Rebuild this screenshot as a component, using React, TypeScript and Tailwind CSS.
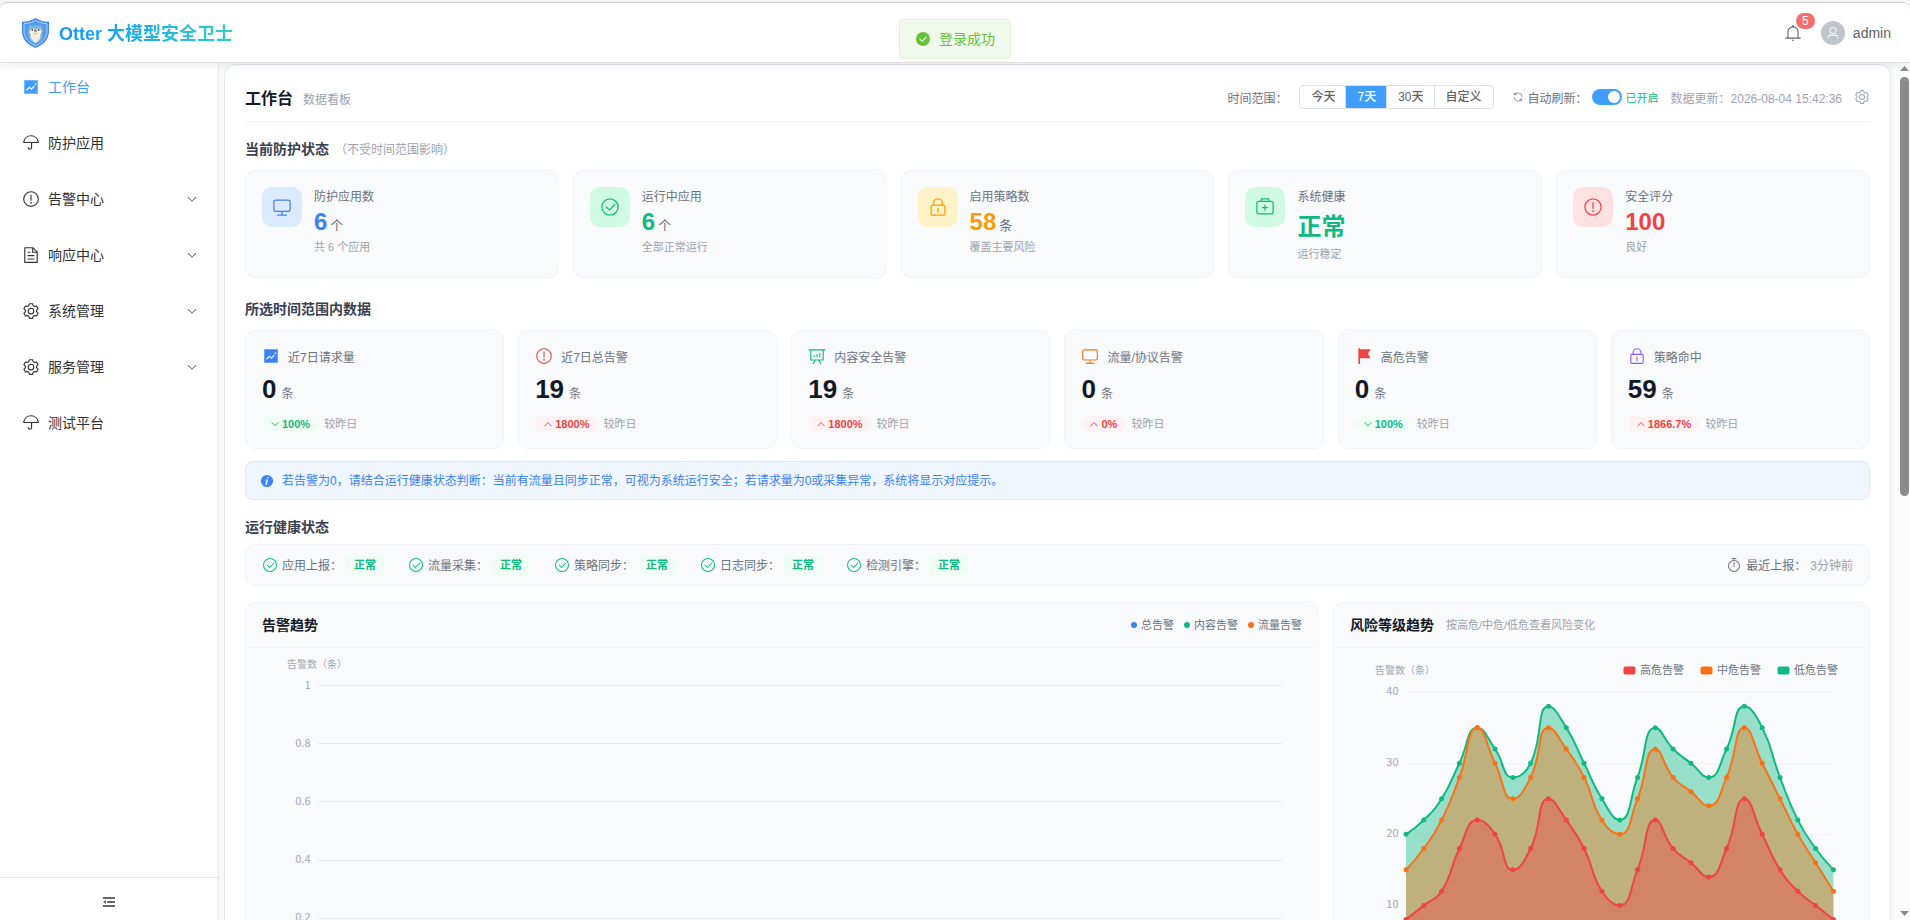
import React from "react";

// Icon outlines on a 1024 x 1024 grid
const ICONS = {
  trend: "M128 896V128h768v768zm291.712-327.296 128 102.4 180.16-201.792-47.744-42.624-139.84 156.608-128-102.4-180.16 201.792 47.744 42.624 139.84-156.608zM816 352a48 48 0 1 0-96 0 48 48 0 0 0 96 0",
  umbrella: "M320 768a32 32 0 1 1 64 0 64 64 0 0 0 128 0V512H64a448 448 0 1 1 896 0H576v256a128 128 0 1 1-256 0m570.688-320a384.128 384.128 0 0 0-757.376 0z",
  warning: "M512 64a448 448 0 1 1 0 896 448 448 0 0 1 0-896m0 832a384 384 0 0 0 0-768 384 384 0 0 0 0 768m48-176a48 48 0 1 1-96 0 48 48 0 0 1 96 0m-48-464a32 32 0 0 1 32 32v288a32 32 0 0 1-64 0V288a32 32 0 0 1 32-32",
  document: "M832 384H576V128H192v768h640zm-26.496-64L640 154.496V320zM160 64h480l256 256v608a32 32 0 0 1-32 32H160a32 32 0 0 1-32-32V96a32 32 0 0 1 32-32m160 448h384v64H320zm0-192h160v64H320zm0 384h384v64H320z",
  setting: "M600.704 64a32 32 0 0 1 30.464 22.208l35.2 109.376c14.784 7.232 28.928 15.36 42.432 24.512l112.384-24.192a32 32 0 0 1 34.432 15.36L944.32 364.8a32 32 0 0 1-4.032 37.504l-77.12 85.12a357.12 357.12 0 0 1 0 49.024l77.12 85.248a32 32 0 0 1 4.032 37.504l-88.704 153.6a32 32 0 0 1-34.432 15.296L708.8 803.904c-13.44 9.088-27.648 17.28-42.368 24.512l-35.264 109.376A32 32 0 0 1 600.704 960H423.296a32 32 0 0 1-30.464-22.208L357.696 828.48a351.616 351.616 0 0 1-42.56-24.64l-112.32 24.256a32 32 0 0 1-34.432-15.36L79.68 659.2a32 32 0 0 1 4.032-37.504l77.12-85.248a357.12 357.12 0 0 1 0-48.896l-77.12-85.248A32 32 0 0 1 79.68 364.8l88.704-153.6a32 32 0 0 1 34.432-15.296l112.32 24.256c13.568-9.152 27.776-17.408 42.56-24.64l35.2-109.312A32 32 0 0 1 423.232 64H600.64zm-23.424 64H446.72l-36.352 113.088-24.512 11.968a294.113 294.113 0 0 0-34.816 20.096l-22.656 15.36-116.224-25.088-65.28 113.152 79.68 88.192-1.92 27.136a293.12 293.12 0 0 0 0 40.192l1.92 27.136-79.808 88.192 65.344 113.152 116.224-25.024 22.656 15.296a294.113 294.113 0 0 0 34.816 20.096l24.512 11.968L446.72 896h130.688l36.48-113.152 24.448-11.904a288.282 288.282 0 0 0 34.752-20.096l22.592-15.296 116.288 25.024 65.28-113.152-79.744-88.192 1.92-27.136a293.12 293.12 0 0 0 0-40.256l-1.92-27.136 79.808-88.128-65.344-113.152-116.288 24.96-22.592-15.232a287.616 287.616 0 0 0-34.752-20.096l-24.448-11.904L577.344 128zM512 320a192 192 0 1 1 0 384 192 192 0 0 1 0-384m0 64a128 128 0 1 0 0 256 128 128 0 0 0 0-256",
  down: "M831.872 340.864 512 652.672 192.128 340.864a30.592 30.592 0 0 0-42.752 0 29.12 29.12 0 0 0 0 41.6L489.664 714.24a32 32 0 0 0 44.672 0l340.288-331.712a29.12 29.12 0 0 0 0-41.728 30.592 30.592 0 0 0-42.752 0z",
  up: "m488.832 344.32-339.84 356.672a32 32 0 0 0 0 44.16l.384.384a29.44 29.44 0 0 0 42.688 0l320-335.872 319.872 335.872a29.44 29.44 0 0 0 42.688 0l.384-.384a32 32 0 0 0 0-44.16L535.168 344.32a32 32 0 0 0-46.336 0",
  monitor: "M544 768v128h192a32 32 0 1 1 0 64H288a32 32 0 1 1 0-64h192V768H192A128 128 0 0 1 64 640V256a128 128 0 0 1 128-128h640a128 128 0 0 1 128 128v384a128 128 0 0 1-128 128zM192 192a64 64 0 0 0-64 64v384a64 64 0 0 0 64 64h640a64 64 0 0 0 64-64V256a64 64 0 0 0-64-64z",
  check: "M512 896a384 384 0 1 0 0-768 384 384 0 0 0 0 768m0 64a448 448 0 1 1 0-896 448 448 0 0 1 0 896M745.344 361.344a32 32 0 0 1 45.312 45.312l-288 288a32 32 0 0 1-45.312 0l-160-160a32 32 0 1 1 45.312-45.312L480 626.752z",
  lock: "M224 448a32 32 0 0 0-32 32v384a32 32 0 0 0 32 32h576a32 32 0 0 0 32-32V480a32 32 0 0 0-32-32zm0-64h576a96 96 0 0 1 96 96v384a96 96 0 0 1-96 96H224a96 96 0 0 1-96-96V480a96 96 0 0 1 96-96M512 544a32 32 0 0 1 32 32v192a32 32 0 1 1-64 0V576a32 32 0 0 1 32-32m192-160v-64a192 192 0 1 0-384 0v64zM512 64a256 256 0 0 1 256 256v128H256V320A256 256 0 0 1 512 64",
  kit: "M192 256a64 64 0 0 0-64 64v448a64 64 0 0 0 64 64h640a64 64 0 0 0 64-64V320a64 64 0 0 0-64-64zm0-64h640a128 128 0 0 1 128 128v448a128 128 0 0 1-128 128H192A128 128 0 0 1 64 768V320a128 128 0 0 1 128-128M544 512h96a32 32 0 0 1 0 64h-96v96a32 32 0 0 1-64 0v-96h-96a32 32 0 0 1 0-64h96v-96a32 32 0 0 1 64 0zM352 128v64h320v-64zm-32-64h384a32 32 0 0 1 32 32v128a32 32 0 0 1-32 32H320a32 32 0 0 1-32-32V96a32 32 0 0 1 32-32",
  analysis: "m665.216 768 110.848 192h-73.856L591.36 768H433.024L322.176 960H248.32l110.848-192H160a32 32 0 0 1-32-32V192H64a32 32 0 0 1 0-64h896a32 32 0 1 1 0 64h-64v544a32 32 0 0 1-32 32zM832 192H192v512h640zM352 448a32 32 0 0 1 32 32v64a32 32 0 0 1-64 0v-64a32 32 0 0 1 32-32m160-64a32 32 0 0 1 32 32v128a32 32 0 0 1-64 0V416a32 32 0 0 1 32-32m160-64a32 32 0 0 1 32 32v192a32 32 0 1 1-64 0V352a32 32 0 0 1 32-32",
  flag: "M288 128h608L736 384l160 256H288v320h-96V64h96z",
  info: "M512 64a448 448 0 1 1 0 896.064A448 448 0 0 1 512 64m67.2 275.072c33.28 0 60.288-23.104 60.288-57.344s-27.072-57.344-60.288-57.344c-33.28 0-60.16 23.104-60.16 57.344s26.88 57.344 60.16 57.344M590.912 699.2c0-6.848 2.368-24.64 1.024-34.752l-52.608 60.544c-10.88 11.456-24.512 19.392-30.912 17.28a12.992 12.992 0 0 1-8.256-14.72l87.68-276.992c7.168-35.136-12.544-67.2-54.336-71.296-44.096 0-108.992 44.736-148.48 101.504 0 6.784-1.28 23.68.064 33.792l52.544-60.608c10.88-11.328 23.552-19.328 29.952-17.152a12.8 12.8 0 0 1 7.808 16.128L388.48 728.576c-10.048 32.256 8.96 63.872 55.04 71.04 67.84 0 107.904-43.648 147.456-100.416z",
  success: "M512 64a448 448 0 1 1 0 896 448 448 0 0 1 0-896m-55.808 536.384-99.52-99.584a38.4 38.4 0 1 0-54.336 54.336l126.72 126.72a38.272 38.272 0 0 0 54.336 0l262.4-262.464a38.4 38.4 0 1 0-54.272-54.336z",
  refresh: "M771.776 794.88A384 384 0 0 1 128 512h64a320 320 0 0 0 555.712 216.448H654.72a32 32 0 1 1 0-64h149.056a32 32 0 0 1 32 32v148.928a32 32 0 1 1-64 0v-50.56zM276.288 295.616h92.992a32 32 0 0 1 0 64H220.16a32 32 0 0 1-32-32V178.56a32 32 0 0 1 64 0v50.56A384 384 0 0 1 896.128 512h-64a320 320 0 0 0-555.776-216.384z",
  user: "M512 512a192 192 0 1 0 0-384 192 192 0 0 0 0 384m0 64a256 256 0 1 1 0-512 256 256 0 0 1 0 512m320 320v-96a96 96 0 0 0-96-96H288a96 96 0 0 0-96 96v96a32 32 0 1 1-64 0v-96a160 160 0 0 1 160-160h448a160 160 0 0 1 160 160v96a32 32 0 1 1-64 0",
  bell: "M512 64a64 64 0 0 1 64 64v64H448v-64a64 64 0 0 1 64-64M256 768h512V448a256 256 0 1 0-512 0zm256-640a320 320 0 0 1 320 320v384H192V448a320 320 0 0 1 320-320M96 768h832q32 0 32 32t-32 32H96q-32 0-32-32t32-32m352 128h128a64 64 0 0 1-128 0",
  timer: "M512 896a320 320 0 1 0 0-640 320 320 0 0 0 0 640m0 64a384 384 0 1 1 0-768 384 384 0 0 1 0 768M512 320a32 32 0 0 1 32 32l-.512 224a32 32 0 1 1-64 0L480 352a32 32 0 0 1 32-32M448 576a64 64 0 1 0 128 0 64 64 0 1 0-128 0m96-448v128h-64V128h-96a32 32 0 0 1 0-64h256a32 32 0 1 1 0 64z",
};

type IconName = keyof typeof ICONS;

function Icon({ name, className }: { name: IconName; className?: string }) {
  return (
    <svg viewBox="0 0 1024 1024" fill="currentColor" className={`shrink-0 ${className ?? ""}`}>
      <path d={ICONS[name]} />
    </svg>
  );
}

function Logo() {
  return (
    <svg viewBox="0 0 27 30" className="h-[30px] w-[27px]">
      <path d="M13.5 0C17 2.4 21.5 3.6 27 3.8V13c0 8-5 13.5-13.5 17C5 26.5 0 21 0 13V3.8C5.5 3.6 10 2.4 13.5 0z" fill="#3f86ea" />
      <path d="M13.5 2.3c3.2 2 7 3 11.5 3.3V13c0 7-4.3 11.7-11.5 14.9C6.3 24.7 2 20 2 13V5.6c4.5-.3 8.3-1.300 11.5-3.3z" fill="#4e9bf3" stroke="#cfe6fd" strokeWidth="0.8" />
      <path d="M7 9c0-2 2-2.600 3.300-1.500h6.400C18 6.400 20 7 20 9c1 2 1.300 5 .4 7.500.8 3-.9 6.500-6.900 9.500-6-3-7.700-6.500-6.900-9.500C5.700 14 6 11 7 9z" fill="#7fb6d3" />
      <path d="M8.200 11.500c1.600-1.300 3.300-.8 5.300.2 2-1 3.700-1.500 5.300-.2.900 2.200.6 4-.6 5.500.8 3-1 5.800-4.700 7.700-3.700-1.900-5.500-4.700-4.700-7.700-1.200-1.500-1.500-3.300-.6-5.500z" fill="#f4efe0" />
      <circle cx="10.3" cy="11.8" r="0.9" fill="#26384d" />
      <circle cx="16.7" cy="11.8" r="0.9" fill="#26384d" />
      <ellipse cx="13.5" cy="12.8" rx="1.5" ry="1.1" fill="#b7604a" />
      <path d="M11.8 15.2q1.700 1.200 3.400 0" stroke="#8d9aa0" strokeWidth="0.6" fill="none" />
    </svg>
  );
}

function Header() {
  return (
    <header className="relative z-10 flex h-[60px] shrink-0 items-center justify-between border-b border-[#e0e0e0] bg-white pr-[19px] pl-[22px] shadow-[0_2px_8px_rgba(0,0,0,0.08)]">
      <div className="flex items-center gap-2.5">
        <Logo />
        <h1 className="bg-gradient-to-r from-[#1890ff] to-[#36cfc9] bg-clip-text pt-[3px] text-[18px] leading-6 font-bold text-transparent">
          Otter 大模型安全卫士
        </h1>
      </div>
      <div className="flex items-center">
        <div className="relative mr-[19px] text-[#606266]">
          <Icon name="bell" className="size-[18px]" />
          <span className="absolute -top-[11px] left-[12px] flex h-4 w-[19px] items-center justify-center rounded-full bg-[#f56c6c] text-xs leading-none text-white">
            5
          </span>
        </div>
        <span className="mr-2 flex size-6 items-center justify-center rounded-full bg-[#c0c4cc] text-white">
          <Icon name="user" className="size-3.5" />
        </span>
        <span className="text-sm text-[#606266]">admin</span>
      </div>
      {/* Login toast */}
      <div className="absolute top-4 left-[899px] flex h-10 w-[112px] items-center gap-2 rounded border border-[#e1f3d8] bg-[#f0f9eb] pl-[15px] text-[#67c23a]">
        <Icon name="success" className="size-4" />
        <span className="text-sm whitespace-nowrap">登录成功</span>
      </div>
    </header>
  );
}

const menu: { icon: IconName; label: string; sub?: boolean; active?: boolean }[] = [
  { icon: "trend", label: "工作台", active: true },
  { icon: "umbrella", label: "防护应用" },
  { icon: "warning", label: "告警中心", sub: true },
  { icon: "document", label: "响应中心", sub: true },
  { icon: "setting", label: "系统管理", sub: true },
  { icon: "setting", label: "服务管理", sub: true },
  { icon: "umbrella", label: "测试平台" },
];

function Sidebar() {
  return (
    <aside className="flex w-[219px] shrink-0 flex-col border-r border-[#e4e7ed] bg-white">
      <nav className="-mt-1 flex-1">
        {menu.map((item) => (
          <div
            key={item.label}
            className={`flex h-14 items-center pr-5 pl-[22px] text-sm ${item.active ? "text-[#409eff]" : "text-[#303133]"}`}
          >
            <Icon name={item.icon} className="mr-2 size-[18px]" />
            <span className="flex-1">{item.label}</span>
            {item.sub && <Icon name="down" className="size-3" />}
          </div>
        ))}
      </nav>
      <div className="flex h-[43px] items-center justify-center border-t border-[#e4e7ed] pt-1.5">
        <svg viewBox="0 0 12 10" className="h-2.5 w-3" fill="#666">
          <path d="M0 0h12v2H0zM4 4h8v2H4zM0 8h12v2H0zM3 3v4L0 5z" />
        </svg>
      </div>
    </aside>
  );
}

function Toolbar() {
  const ranges = ["今天", "7天", "30天", "自定义"];
  return (
    <div className="flex items-center justify-between border-b border-[#f0f2f5] pt-5 pb-3 text-xs">
      <div className="flex h-6 items-center gap-2.5">
        <h2 className="pt-[3px] text-base leading-6 font-bold text-[#111827]">工作台</h2>
        <span className="pt-[5px] text-[#9ca3af]">数据看板</span>
      </div>
      <div className="flex h-6 items-center">
        <span className="mr-3 pt-[3px] text-[#6b7280]">时间范围：</span>
        <div className="mr-[18px] flex h-6 overflow-hidden rounded border border-[#dcdfe6] font-medium">
          {ranges.map((r) => (
            <button
              key={r}
              className={`border-r border-[#dcdfe6] pr-2.5 pl-[11px] last:border-r-0 last:pr-[11px] ${r === "7天" ? "bg-[#409eff] text-white" : "text-[#606266]"}`}
            >
              {r}
            </button>
          ))}
        </div>
        <Icon name="refresh" className="mr-1 size-3 text-[#6b7280]" />
        <span className="pt-[3px] text-[#6b7280]">自动刷新：</span>
        <span className="ml-1 flex h-4 w-[30px] items-center justify-end rounded-full bg-[#409eff] pr-0.5">
          <span className="size-3 rounded-full bg-white" />
        </span>
        <span className="mr-3 ml-1 pt-0.5 text-[11px] text-[#10b981]">已开启</span>
        <span className="mr-3 pt-[3px] text-[#9ca3af]">数据更新：2026-08-04 15:42:36</span>
        <Icon name="setting" className="size-4 text-[#9ca3af]" />
      </div>
    </div>
  );
}

function SectionTitle({ title, note, className }: { title: string; note?: string; className: string }) {
  return (
    <div className={`flex h-[22px] items-center gap-1.5 ${className}`}>
      <h3 className="text-sm font-bold text-[#374151]">{title}</h3>
      {note && <span className="pt-px text-xs text-[#9ca3af]">{note}</span>}
    </div>
  );
}

const statusCards: { icon: IconName; box: string; color: string; label: string; value: string; unit?: string; desc: string }[] = [
  { icon: "monitor", box: "bg-[#dbeafe] text-[#3b82f6]", color: "text-[#3b82f6]", label: "防护应用数", value: "6", unit: "个", desc: "共 6 个应用" },
  { icon: "check", box: "bg-[#d1fae5] text-[#10b981]", color: "text-[#10b981]", label: "运行中应用", value: "6", unit: "个", desc: "全部正常运行" },
  { icon: "lock", box: "bg-[#fef3c7] text-[#f59e0b]", color: "text-[#f59e0b]", label: "启用策略数", value: "58", unit: "条", desc: "覆盖主要风险" },
  { icon: "kit", box: "bg-[#d1fae5] text-[#10b981]", color: "text-[#10b981]", label: "系统健康", value: "正常", desc: "运行稳定" },
  { icon: "warning", box: "bg-[#fee2e2] text-[#ef4444]", color: "text-[#ef4444]", label: "安全评分", value: "100", desc: "良好" },
];

function StatusCards() {
  return (
    <div className="grid grid-cols-5 gap-3.5">
      {statusCards.map((c) => (
        <div key={c.label} className="flex h-[108px] gap-3 rounded-[10px] border border-[#f1f3f6] bg-[#f9fafc] p-4">
          <span className={`flex size-10 shrink-0 items-center justify-center rounded-[10px] ${c.box}`}>
            <Icon name={c.icon} className="size-5" />
          </span>
          <div>
            <div className="pt-0.5 text-xs leading-4 text-[#6b7280]">{c.label}</div>
            <div className={`flex items-baseline gap-[3px] ${c.unit || c.value === "100" ? "h-[33px] leading-[33px]" : "h-10 leading-[44px]"}`}>
              <span className={`text-2xl leading-[inherit] font-bold ${c.color}`}>{c.value}</span>
              {c.unit && <span className="text-[13px] leading-none text-[#6b7280]">{c.unit}</span>}
            </div>
            <div className="text-[11px] leading-[18px] text-[#9ca3af]">{c.desc}</div>
          </div>
        </div>
      ))}
    </div>
  );
}

const metrics: { icon: IconName; color: string; label: string; value: string; change: string; up: boolean }[] = [
  { icon: "trend", color: "text-[#3b82f6]", label: "近7日请求量", value: "0", change: "100%", up: false },
  { icon: "warning", color: "text-[#ef4444]", label: "近7日总告警", value: "19", change: "1800%", up: true },
  { icon: "analysis", color: "text-[#10b981]", label: "内容安全告警", value: "19", change: "1800%", up: true },
  { icon: "monitor", color: "text-[#f97316]", label: "流量/协议告警", value: "0", change: "0%", up: true },
  { icon: "flag", color: "text-[#ef4444]", label: "高危告警", value: "0", change: "100%", up: false },
  { icon: "lock", color: "text-[#8b5cf6]", label: "策略命中", value: "59", change: "1866.7%", up: true },
];

function MetricCards() {
  return (
    <div className="grid grid-cols-6 gap-3.5">
      {metrics.map((m) => (
        <div key={m.label} className="h-[119px] rounded-[10px] border border-[#f1f3f6] bg-[#f9fafc] p-4">
          <div className="flex h-[18px] items-center gap-2">
            <Icon name={m.icon} className={`size-[18px] ${m.color}`} />
            <span className="pt-1 text-xs leading-4 text-[#6b7280]">{m.label}</span>
          </div>
          <div className="mt-2 flex h-8 items-baseline gap-[5px]">
            <span className="text-[26px] leading-8 font-bold text-[#111827]">{m.value}</span>
            <span className="text-xs leading-none text-[#6b7280]">条</span>
          </div>
          <div className="mt-[11px] flex h-4 items-center gap-1.5 text-[11px]">
            <span
              className={`flex h-4 items-center gap-0.5 rounded-full px-2 font-bold ${m.up ? "bg-[#fef2f2] text-[#ef4444]" : "bg-[#f0fdf4] text-[#10b981]"}`}
            >
              <Icon name={m.up ? "up" : "down"} className="size-2.5" />
              {m.change}
            </span>
            <span className="pt-px text-[#9ca3af]">较昨日</span>
          </div>
        </div>
      ))}
    </div>
  );
}

function HealthBar() {
  const checks = ["应用上报：", "流量采集：", "策略同步：", "日志同步：", "检测引擎："];
  return (
    <div className="flex h-[42px] items-center justify-between rounded-[10px] border border-[#f1f3f6] bg-[#f9fafc] px-4 text-xs text-[#6b7280]">
      <div className="flex items-center gap-6">
        {checks.map((c) => (
          <div key={c} className="flex items-center gap-1">
            <Icon name="check" className="size-4 text-[#10b981]" />
            <span className="pt-0.5">{c}</span>
            <span className="flex h-5 items-center rounded bg-[#f0fdf4] px-2 text-[11px] font-bold text-[#10b981]">正常</span>
          </div>
        ))}
      </div>
      <div className="flex items-center gap-1">
        <Icon name="timer" className="size-4" />
        <span className="pt-0.5">最近上报：</span>
        <span className="pt-0.5 text-[#9ca3af]">3分钟前</span>
      </div>
    </div>
  );
}

function AlertTrend() {
  const ticks = ["1", "0.8", "0.6", "0.4", "0.2"];
  return (
    <svg width="1072" height="330" className="block font-['Noto_Sans_CJK_SC',sans-serif] text-[11px]">
      <text x="41" y="20" fill="#a3a8b3" className="text-[10px]">告警数（条）</text>
      {ticks.map((t, i) => (
        <g key={t}>
          <text x="64.5" y={40.5 + i * 58.2} textAnchor="end" fill="#a3a8b3">{t}</text>
          <line x1="72" x2="1036" y1={Math.round(37 + i * 58.2) + 0.5} y2={Math.round(37 + i * 58.2) + 0.5} stroke="#e5e7eb" />
        </g>
      ))}
    </svg>
  );
}

const low = [20, 22, 25, 30, 35, 32, 28, 30, 38, 35, 30, 25, 22, 28, 35, 32, 30, 28, 32, 38, 35, 28, 22, 18, 15];
const mid = [15, 18, 22, 28, 35, 30, 25, 28, 35, 32, 28, 22, 20, 25, 32, 28, 26, 24, 28, 35, 30, 25, 20, 16, 12];
const high = [8, 10, 12, 18, 22, 20, 15, 18, 25, 22, 18, 12, 10, 15, 22, 18, 16, 14, 18, 25, 20, 15, 12, 10, 8];

const X0 = 72;
const STEP = 17.81;
const Y0 = 328.5;
const UNIT = 7.11;

const clamp = (v: number, a: number, b: number) => Math.max(Math.min(v, Math.max(a, b)), Math.min(a, b));

// Smooth curve whose control points never leave the box of their segment
function smoothPath(pts: number[][]) {
  let d = `M${pts[0][0]} ${pts[0][1]}`;
  let [c0x, c0y] = pts[0];
  for (let i = 1; i < pts.length; i++) {
    const [px, py] = pts[i - 1];
    const [x, y] = pts[i];
    let c1x = x;
    let c1y = y;
    let n0x = x;
    let n0y = y;
    if (i < pts.length - 1) {
      const [nx, ny] = pts[i + 1];
      const prev = Math.hypot(x - px, y - py);
      const next = Math.hypot(nx - x, ny - y);
      const ratio = next / (next + prev);
      n0x = clamp(x + (nx - px) * 0.5 * ratio, x, nx);
      n0y = clamp(y + (ny - py) * 0.5 * ratio, y, ny);
      c1x = clamp(x - ((n0x - x) * prev) / next, px, x);
      c1y = clamp(y - ((n0y - y) * prev) / next, py, y);
      n0x = x + ((x - c1x) * next) / prev;
      n0y = y + ((y - c1y) * next) / prev;
    }
    d += `C${c0x} ${c0y} ${c1x} ${c1y} ${x} ${y}`;
    c0x = n0x;
    c0y = n0y;
  }
  return d;
}

function Series({ data, color }: { data: number[]; color: string }) {
  const pts = data.map((v, i) => [X0 + i * STEP, Y0 - v * UNIT]);
  const line = smoothPath(pts);
  return (
    <g>
      <path d={`${line}V${Y0}H${X0}Z`} fill={color} fillOpacity="0.42" />
      <path d={line} fill="none" stroke={color} strokeWidth="2" />
      {pts.map(([x, y]) => (
        <circle key={x} cx={x} cy={y} r="2.5" fill={color} />
      ))}
    </g>
  );
}

function RiskTrend() {
  const legend = [
    { label: "高危告警", color: "#ef4444" },
    { label: "中危告警", color: "#f97316" },
    { label: "低危告警", color: "#10b981" },
  ];
  return (
    <svg width="535" height="330" className="block font-['Noto_Sans_CJK_SC',sans-serif] text-[11px]">
      <text x="41" y="26" fill="#a3a8b3" className="text-[10px]">告警数（条）</text>
      {legend.map((l, i) => (
        <g key={l.label}>
          <rect x={289.5 + i * 77} y="18.5" width="12" height="8" rx="2" fill={l.color} />
          <text x={306 + i * 77} y="26" fill="#6b7280">{l.label}</text>
        </g>
      ))}
      {[40, 30, 20, 10].map((v) => (
        <g key={v}>
          <text x="64.5" y={Y0 - v * UNIT + 2.5} textAnchor="end" fill="#a3a8b3">{v}</text>
          <line x1={X0} x2={X0 + 24 * STEP} y1={Math.round(Y0 - v * UNIT) + 0.5} y2={Math.round(Y0 - v * UNIT) + 0.5} stroke="#f1f3f5" />
        </g>
      ))}
      <Series data={low} color="#10b981" />
      <Series data={mid} color="#f97316" />
      <Series data={high} color="#ef4444" />
    </svg>
  );
}

function Charts() {
  const legend = [
    { label: "总告警", dot: "bg-[#3b82f6]" },
    { label: "内容告警", dot: "bg-[#10b981]" },
    { label: "流量告警", dot: "bg-[#f97316]" },
  ];
  return (
    <div className="mt-4 grid grid-cols-[1074px_537px] gap-3.5">
      <section className="rounded-t-[10px] border border-[#f1f3f6] bg-[#f9fafc]">
        <div className="flex h-[45px] items-center justify-between border-b border-[#f1f3f6] px-4">
          <h3 className="text-sm font-bold text-[#111827]">告警趋势</h3>
          <div className="flex gap-2.5 text-[11px] text-[#6b7280]">
            {legend.map((l) => (
              <span key={l.label} className="flex items-center gap-1">
                <span className={`size-1.5 rounded-full ${l.dot}`} />
                {l.label}
              </span>
            ))}
          </div>
        </div>
        <AlertTrend />
      </section>
      <section className="rounded-t-[10px] border border-[#f1f3f6] bg-[#f9fafc]">
        <div className="flex h-[45px] items-center gap-3 border-b border-[#f1f3f6] px-4">
          <h3 className="text-sm font-bold text-[#111827]">风险等级趋势</h3>
          <span className="text-[11px] text-[#9ca3af]">按高危/中危/低危查看风险变化</span>
        </div>
        <RiskTrend />
      </section>
    </div>
  );
}

function ScrollBar() {
  return (
    <div className="flex w-[15px] shrink-0 flex-col items-center justify-between bg-[#fcfcfc] pt-[3px] pr-px pb-1 pl-1">
      <div className="flex flex-col items-center">
        <svg viewBox="0 0 9 5" className="mb-1.5 h-[5px] w-[9px]" fill="#8b8b8b">
          <path d="M4.5 0 9 5H0z" />
        </svg>
        <div className="h-[419px] w-[9px] rounded-full bg-[#8b8b8b]" />
      </div>
      <svg viewBox="0 0 9 5" className="h-[5px] w-[9px]" fill="#8b8b8b">
        <path d="M4.5 5 9 0H0z" />
      </svg>
    </div>
  );
}

export default function App() {
  return (
    <div className="h-screen overflow-hidden bg-[#f5f5f5] pt-0.5 font-['Liberation_Sans','Noto_Sans_CJK_SC',sans-serif]">
      <div className="flex h-full flex-col overflow-hidden rounded-t-lg border-t border-[#ccc] bg-white">
        <Header />
        <div className="flex h-[857px] shrink-0">
          <Sidebar />
          <main className="flex min-w-0 flex-1 bg-[#f8f9fc]">
            <div className="mt-px mr-1 ml-[5px] min-w-0 flex-1 overflow-hidden rounded-t-xl border border-b-0 border-[#e4e7ed] bg-white px-5">
              <Toolbar />
              <SectionTitle title="当前防护状态" note="（不受时间范围影响）" className="mt-4 mb-2.5" />
              <StatusCards />
              <SectionTitle title="所选时间范围内数据" className="mt-5 mb-2.5" />
              <MetricCards />
              <div className="mt-3 flex h-[39px] items-center gap-2 rounded-lg border border-[#dbeafe] bg-[#eff6ff] px-3.5 text-xs text-[#3b82f6]">
                <Icon name="info" className="size-3.5" />
                若告警为0，请结合运行健康状态判断：当前有流量且同步正常，可视为系统运行安全；若请求量为0或采集异常，系统将显示对应提示。
              </div>
              <SectionTitle title="运行健康状态" className="mt-4 mb-1.5" />
              <HealthBar />
              <Charts />
            </div>
            <ScrollBar />
          </main>
        </div>
      </div>
    </div>
  );
}
